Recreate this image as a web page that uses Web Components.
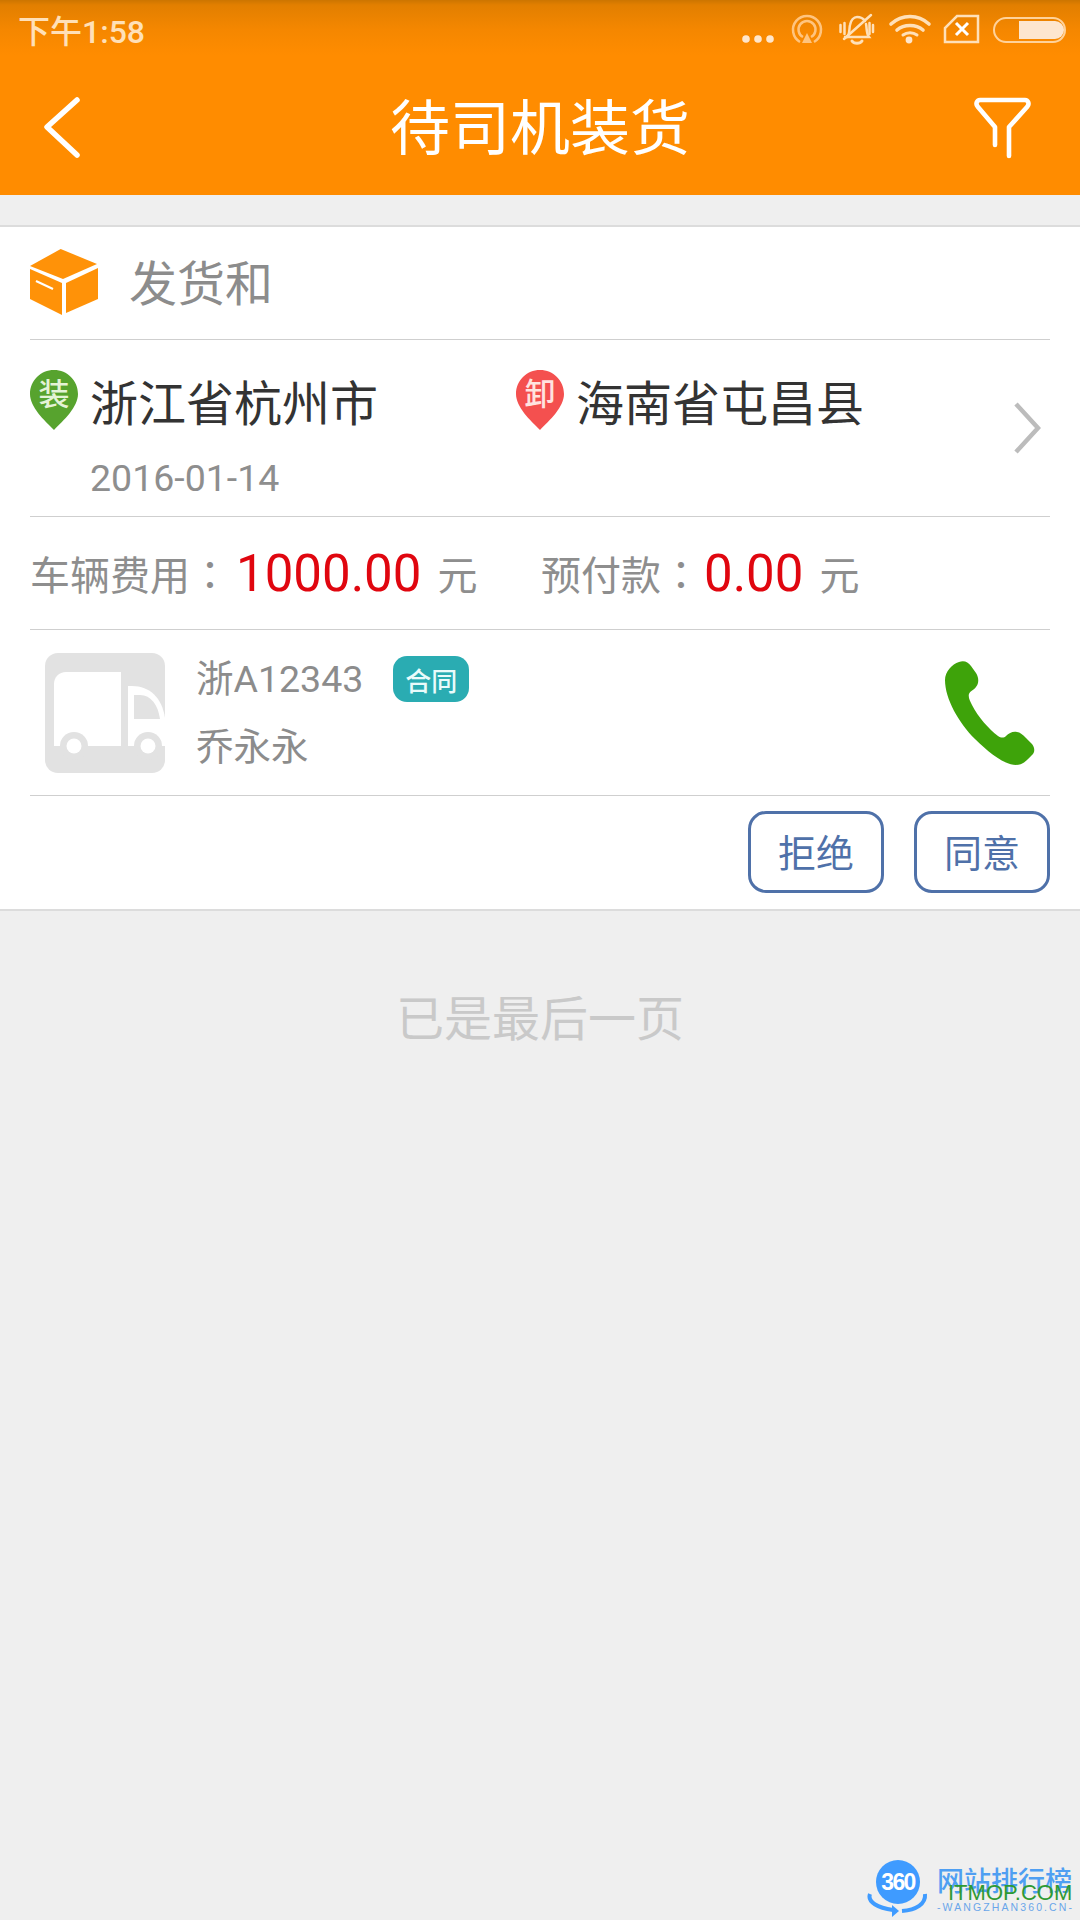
<!DOCTYPE html>
<html lang="zh">
<head>
<meta charset="utf-8">
<title>待司机装货</title>
<style>
  html, body { margin: 0; padding: 0; }
  body {
    width: 1080px;
    height: 1920px;
    overflow: hidden;
    position: relative;
    background: #efefef;
    font-family: Roboto, "Noto Sans CJK SC", sans-serif;
  }
</style>
</head>
<body>
<app-bar heading="待司机装货" time="下午1:58"></app-bar>
<order-card>
  <goods-row>发货和</goods-row>
  <route-row from="浙江省杭州市" to="海南省屯昌县" date="2016-01-14"></route-row>
  <fee-row truck="1000.00" prepaid="0.00"></fee-row>
  <driver-row plate="浙A12343" tag="合同" name="乔永永"></driver-row>
  <order-actions>
    <action-button>拒绝</action-button>
    <action-button>同意</action-button>
  </order-actions>
</order-card>
<end-note>已是最后一页</end-note>
<site-mark></site-mark>

<script>
class AppBar extends HTMLElement {
  constructor() {
    super();
    this.attachShadow({mode: 'open'}).innerHTML = `<style>
        :host {
          display: block;
          height: 195px;
          color: #fff;
          background: linear-gradient(#cc7500 0, #e27f00 5px, #f58700 30px, #ff8c00 55px);
        }
        .status {
          height: 50px;
          display: flex;
          align-items: center;
          justify-content: space-between;
          padding: 8px 10px 0 18px;
          font-size: 32px;
          font-weight: 500;
          color: #ffe0b8;
          box-sizing: border-box;
        }
        .status svg { display: block; margin-top: -8px; }
        .nav { height: 145px; display: flex; align-items: center; justify-content: space-between; }
        .title { font-size: 60px; line-height: 1; margin-top: 14px; }
        .nav svg { display: block; margin-top: 10px; }
      </style>
      <div class="status">
        <span>${this.getAttribute('time')}</span>
        <svg width="340" height="50" viewBox="0 0 340 50" fill="none">
          <g fill="#ffe6cc"><circle cx="16" cy="39" r="3.8"/><circle cx="28" cy="39" r="3.8"/><circle cx="40" cy="39" r="3.8"/></g>
          <g stroke="#ffc47e" stroke-width="2.5">
            <path d="M70 42a14 14 0 1 1 14 0"/>
            <path d="M73 37a8.5 8.5 0 1 1 8 0"/>
          </g>
          <path d="M77 33l5 10h-10z" fill="#ffc47e"/>
          <g stroke="#ffe0b8" stroke-width="2.5" stroke-linecap="round">
            <path d="M117 37c3-3 2-8 3-12 1-5 4-8 7-8s6 1 8 4"/>
            <path d="M136 24c1 4 0 9 3 13H115"/>
            <path d="M141 15L114 39"/>
            <path d="M122 41c2 3 8 3 10 0" stroke-width="3"/>
            <path d="M110.500 25v7M114.500 23v11M139.500 23v11M143 25v7"/>
          </g>
          <g stroke="#ffe0b8" stroke-width="3.6" stroke-linecap="round">
            <path d="M161 24c11-10 27-10 38 0"/>
            <path d="M167 30c7-6 19-6 26 0"/>
            <path d="M173 35c4-3 10-3 14 0" stroke-width="3"/>
          </g>
          <circle cx="179" cy="40" r="3.4" fill="#ffe6cc"/>
          <path d="M227 16h21v26h-33V28z" stroke="#ffe0b8" stroke-width="2.5"/>
          <path d="M226 23l12 12M238 23l-12 12" stroke="#fff" stroke-width="3"/>
          <rect x="264" y="18" width="71" height="24" rx="12" stroke="#ffd29a" stroke-width="2"/>
          <path d="M289 21h36a9 9 0 0 1 9 9a9 9 0 0 1-9 9h-36z" fill="#fde6cf"/>
        </svg>
      </div>
      <div class="nav">
        <svg width="110" height="80" viewBox="0 0 110 80" fill="none">
          <path d="M77 12L47 39l30 28" stroke="#fff" stroke-width="5.5" stroke-linecap="round" stroke-linejoin="round"/>
        </svg>
        <span class="title">${this.getAttribute('heading')}</span>
        <svg width="110" height="80" viewBox="0 0 110 80" fill="none">
          <path d="M25 57V39L8 19c-3-3-1-7 2-7h45c3 0 5 4 2 7L39 39v29" stroke="#fff" stroke-width="4.6" stroke-linecap="round" stroke-linejoin="round"/>
        </svg>
      </div>`;
  }
}
customElements.define('app-bar', AppBar);

class OrderCard extends HTMLElement {
  constructor() {
    super();
    this.attachShadow({mode: 'open'}).innerHTML = `<style>
        :host {
          display: block;
          margin-top: 30px;
          background: #fff;
          border-top: 2px solid #dcdcdc;
          border-bottom: 2px solid #dcdcdc;
        }
      </style><slot></slot>`;
  }
}
customElements.define('order-card', OrderCard);

class GoodsRow extends HTMLElement {
  constructor() {
    super();
    this.attachShadow({mode: 'open'}).innerHTML = `<style>
        :host {
          display: flex;
          align-items: center;
          gap: 31px;
          height: 113px;
          margin: 0 30px;
          box-sizing: border-box;
          padding-bottom: 2px;
          border-bottom: 1.5px solid #cfcfcf;
          font-size: 48px;
          color: #8c8c8c;
        }
        svg { display: block; }
        span { margin-top: -4px; }
      </style>
      <svg width="68" height="66" viewBox="0 0 68 66">
        <path d="M30.7 0L67 15 33 30 0 17z" fill="#ff9208"/>
        <path d="M36 34L68 19v31L36 64z" fill="#ff9208"/>
        <path d="M0 20l32 14v32L0 50z" fill="#ff9208"/>
        <path d="M6 32l17 8" stroke="#fff" stroke-width="2.2"/>
      </svg>
      <span><slot></slot></span>`;
  }
}
customElements.define('goods-row', GoodsRow);

class MapPin extends HTMLElement {
  constructor() {
    super();
    const color = this.getAttribute('color');
    this.attachShadow({mode: 'open'}).innerHTML = `<style>
        :host { display: block; position: relative; width: 48px; height: 60px; flex: none; }
        svg { display: block; }
        span {
          position: absolute;
          left: 0; top: 6px;
          width: 48px;
          text-align: center;
          font-size: 31px;
          font-weight: 500;
          line-height: 38px;
          color: ${this.getAttribute('ink')};
        }
      </style>
      <svg width="48" height="60" viewBox="0 0 48 60">
        <path d="M24 0C10.700 0 0 10.500 0 24c0 13 14 26 24 36 10-10 24-23 24-36C48 10.500 37.300 0 24 0z" fill="${color}"/>
      </svg>
      <span><slot></slot></span>`;
  }
}
customElements.define('map-pin', MapPin);

class RouteRow extends HTMLElement {
  constructor() {
    super();
    this.attachShadow({mode: 'open'}).innerHTML = `<style>
        :host {
          display: grid;
          grid-template-columns: 486px 1fr;
          height: 177px;
          margin: 0 30px;
          padding-top: 30px;
          box-sizing: border-box;
          position: relative;
          border-bottom: 1.5px solid #cfcfcf;
        }
        .place { display: flex; gap: 12px; align-items: flex-start; font-size: 48px; line-height: 66px; color: #333; }
        .place span { margin-top: 2px; }
        .date { grid-column: 1; padding-left: 60px; font-size: 37.5px; line-height: 42px; color: #8e8e8e; margin-top: 2px; }
        svg { position: absolute; right: 9px; top: 62px; display: block; }
      </style>
      <div class="place"><map-pin color="#57a32e" ink="#e4f3d6">装</map-pin><span>${this.getAttribute('from')}</span></div>
      <div class="place"><map-pin color="#f4504f" ink="#ffe3e0">卸</map-pin><span>${this.getAttribute('to')}</span></div>
      <div class="date">${this.getAttribute('date')}</div>
      <svg width="28" height="52" viewBox="0 0 28 52" fill="none">
        <path d="M3 2l22 24L3 50" stroke="#bcbcbc" stroke-width="4.500"/>
      </svg>`;
  }
}
customElements.define('route-row', RouteRow);

class FeeRow extends HTMLElement {
  constructor() {
    super();
    this.attachShadow({mode: 'open'}).innerHTML = `<style>
        :host {
          display: grid;
          grid-template-columns: 511px 1fr;
          align-items: center;
          height: 113px;
          margin: 0 30px;
          box-sizing: border-box;
          border-bottom: 1.5px solid #cfcfcf;
          font-size: 40px;
          color: #8e8e8e;
        }
        div { display: flex; align-items: center; }
        i { font-style: normal; font-family: "Noto Sans CJK TC", sans-serif; }
        b { font-weight: 400; font-size: 51px; color: #e0060f; margin: 0 16px 0 6px; }
        div + div b { margin-left: 3px; }
      </style>
      <div>车辆费用<i>：</i><b>${this.getAttribute('truck')}</b>元</div>
      <div>预付款<i>：</i><b>${this.getAttribute('prepaid')}</b>元</div>`;
  }
}
customElements.define('fee-row', FeeRow);

class DriverRow extends HTMLElement {
  constructor() {
    super();
    this.attachShadow({mode: 'open'}).innerHTML = `<style>
        :host {
          display: flex;
          height: 166px;
          margin: 0 30px;
          padding: 23px 15px 0;
          box-sizing: border-box;
          border-bottom: 1.5px solid #cfcfcf;
          gap: 31px;
          font-size: 37.5px;
          color: #8c8c8c;
        }
        svg { display: block; flex: none; }
        .info { flex: 1; margin-top: -3px; }
        .line { display: flex; align-items: center; height: 50px; }
        .line + .line { margin-top: 18px; }
        .tag {
          margin: 8px 0 0 30px;
          width: 76px;
          height: 46px;
          border-radius: 14px;
          background: #2aacb2;
          color: #e9fbfb;
          font-size: 26px;
          font-weight: 500;
          display: flex;
          align-items: center;
          justify-content: center;
        }
        .phone { margin: 8px 0 0 0; }
      </style>
      <svg width="120" height="120" viewBox="0 0 120 120">
        <rect width="120" height="120" rx="13" fill="#e2e2e2"/>
        <path d="M9 93V31c0-7 5-12 12-12h55v74z" fill="#fff"/>
        <path d="M83 33h4c18 0 30 12 33 32v28H83z" fill="#fff"/>
        <path d="M89 42h6c11 0 18 10 20 24H89z" fill="#e2e2e2"/>
        <circle cx="29" cy="93" r="14" fill="#e2e2e2"/>
        <circle cx="103" cy="93" r="14" fill="#e2e2e2"/>
        <circle cx="29" cy="93" r="7.500" fill="#fff"/>
        <circle cx="103" cy="93" r="7.500" fill="#fff"/>
      </svg>
      <div class="info">
        <div class="line">${this.getAttribute('plate')}<span class="tag">${this.getAttribute('tag')}</span></div>
        <div class="line">${this.getAttribute('name')}</div>
      </div>
      <svg class="phone" width="90" height="105" viewBox="0 0 90 105">
        <path fill="#3ea30a" d="M0 19C0 11 7 3 14 1 19-1 23 1 26 5L31 12C34 17 34 22 31 26 29 29 25 30 24 33 23 36 25 40 27 44 33 56 44 68 53 75 56 77 59 77 61 75 64 72 68 70 72 71 75 71 78 74 81 77L87 83C90 87 90 91 87 94 82 99 78 104 71 104 60 104 44 92 30 78 14 62 0 38 0 19z"/>
      </svg>`;
  }
}
customElements.define('driver-row', DriverRow);

class OrderActions extends HTMLElement {
  constructor() {
    super();
    this.attachShadow({mode: 'open'}).innerHTML = `<style>
        :host {
          display: flex;
          justify-content: flex-end;
          gap: 30px;
          height: 113px;
          padding: 15px 30px 0 0;
          box-sizing: border-box;
        }
      </style><slot></slot>`;
  }
}
customElements.define('order-actions', OrderActions);

class ActionButton extends HTMLElement {
  constructor() {
    super();
    this.attachShadow({mode: 'open'}).innerHTML = `<style>
        :host {
          display: flex;
          align-items: center;
          justify-content: center;
          width: 136px;
          height: 82px;
          padding-bottom: 4px;
          box-sizing: border-box;
          border: 3px solid #4f71a9;
          border-radius: 18px;
          color: #4f71a9;
          font-size: 38px;
        }
      </style><slot></slot>`;
  }
}
customElements.define('action-button', ActionButton);

class EndNote extends HTMLElement {
  constructor() {
    super();
    this.attachShadow({mode: 'open'}).innerHTML = `<style>
        :host {
          display: block;
          margin-top: 76px;
          text-align: center;
          font-size: 48px;
          line-height: 66px;
          color: #c9c9c9;
        }
      </style><slot></slot>`;
  }
}
customElements.define('end-note', EndNote);

// watermark sits over the page corner, so it is the one thing placed by offset
class SiteMark extends HTMLElement {
  constructor() {
    super();
    this.attachShadow({mode: 'open'}).innerHTML = `<style>
        :host { position: absolute; left: 866px; top: 1855px; width: 214px; height: 65px; display: block; }
        svg { position: absolute; left: 0; top: 0; }
        .logo { position: absolute; left: 10px; top: 12px; width: 44px; text-align: center; color: #fff; font: 700 23px/30px "Liberation Sans", sans-serif; letter-spacing: -1.6px; }
        .cn { position: absolute; left: 71px; top: 11px; font-size: 27px; font-weight: 500; line-height: 32px; color: #4f9ff2; white-space: nowrap; }
        .en { position: absolute; left: 82px; top: 24px; font: 22px/28px "Liberation Sans", sans-serif; color: #2f9a33; white-space: nowrap; }
        .sub { position: absolute; left: 71px; top: 45px; font: 10.500px/14px "Liberation Sans", sans-serif; letter-spacing: 2.1px; color: #6aa6ea; white-space: nowrap; }
      </style>
      <svg width="66" height="65" viewBox="0 0 66 65" fill="none">
        <circle cx="32" cy="27" r="22" fill="#3f9bff"/>
        <path d="M4 39c-3 8 8 14 23 16" stroke="#3f9bff" stroke-width="4"/>
        <path d="M26 50l7 6-7 6z" fill="#3f9bff"/>
        <path d="M36 56c14-1 24-7 23-17" stroke="#3f9bff" stroke-width="4"/>
      </svg>
      <span class="logo">360</span>
      <span class="cn">网站排行榜</span>
      <span class="en">ITMOP.COM</span>
      <span class="sub">-WANGZHAN360.CN-</span>`;
  }
}
customElements.define('site-mark', SiteMark);
</script>
</body>
</html>
